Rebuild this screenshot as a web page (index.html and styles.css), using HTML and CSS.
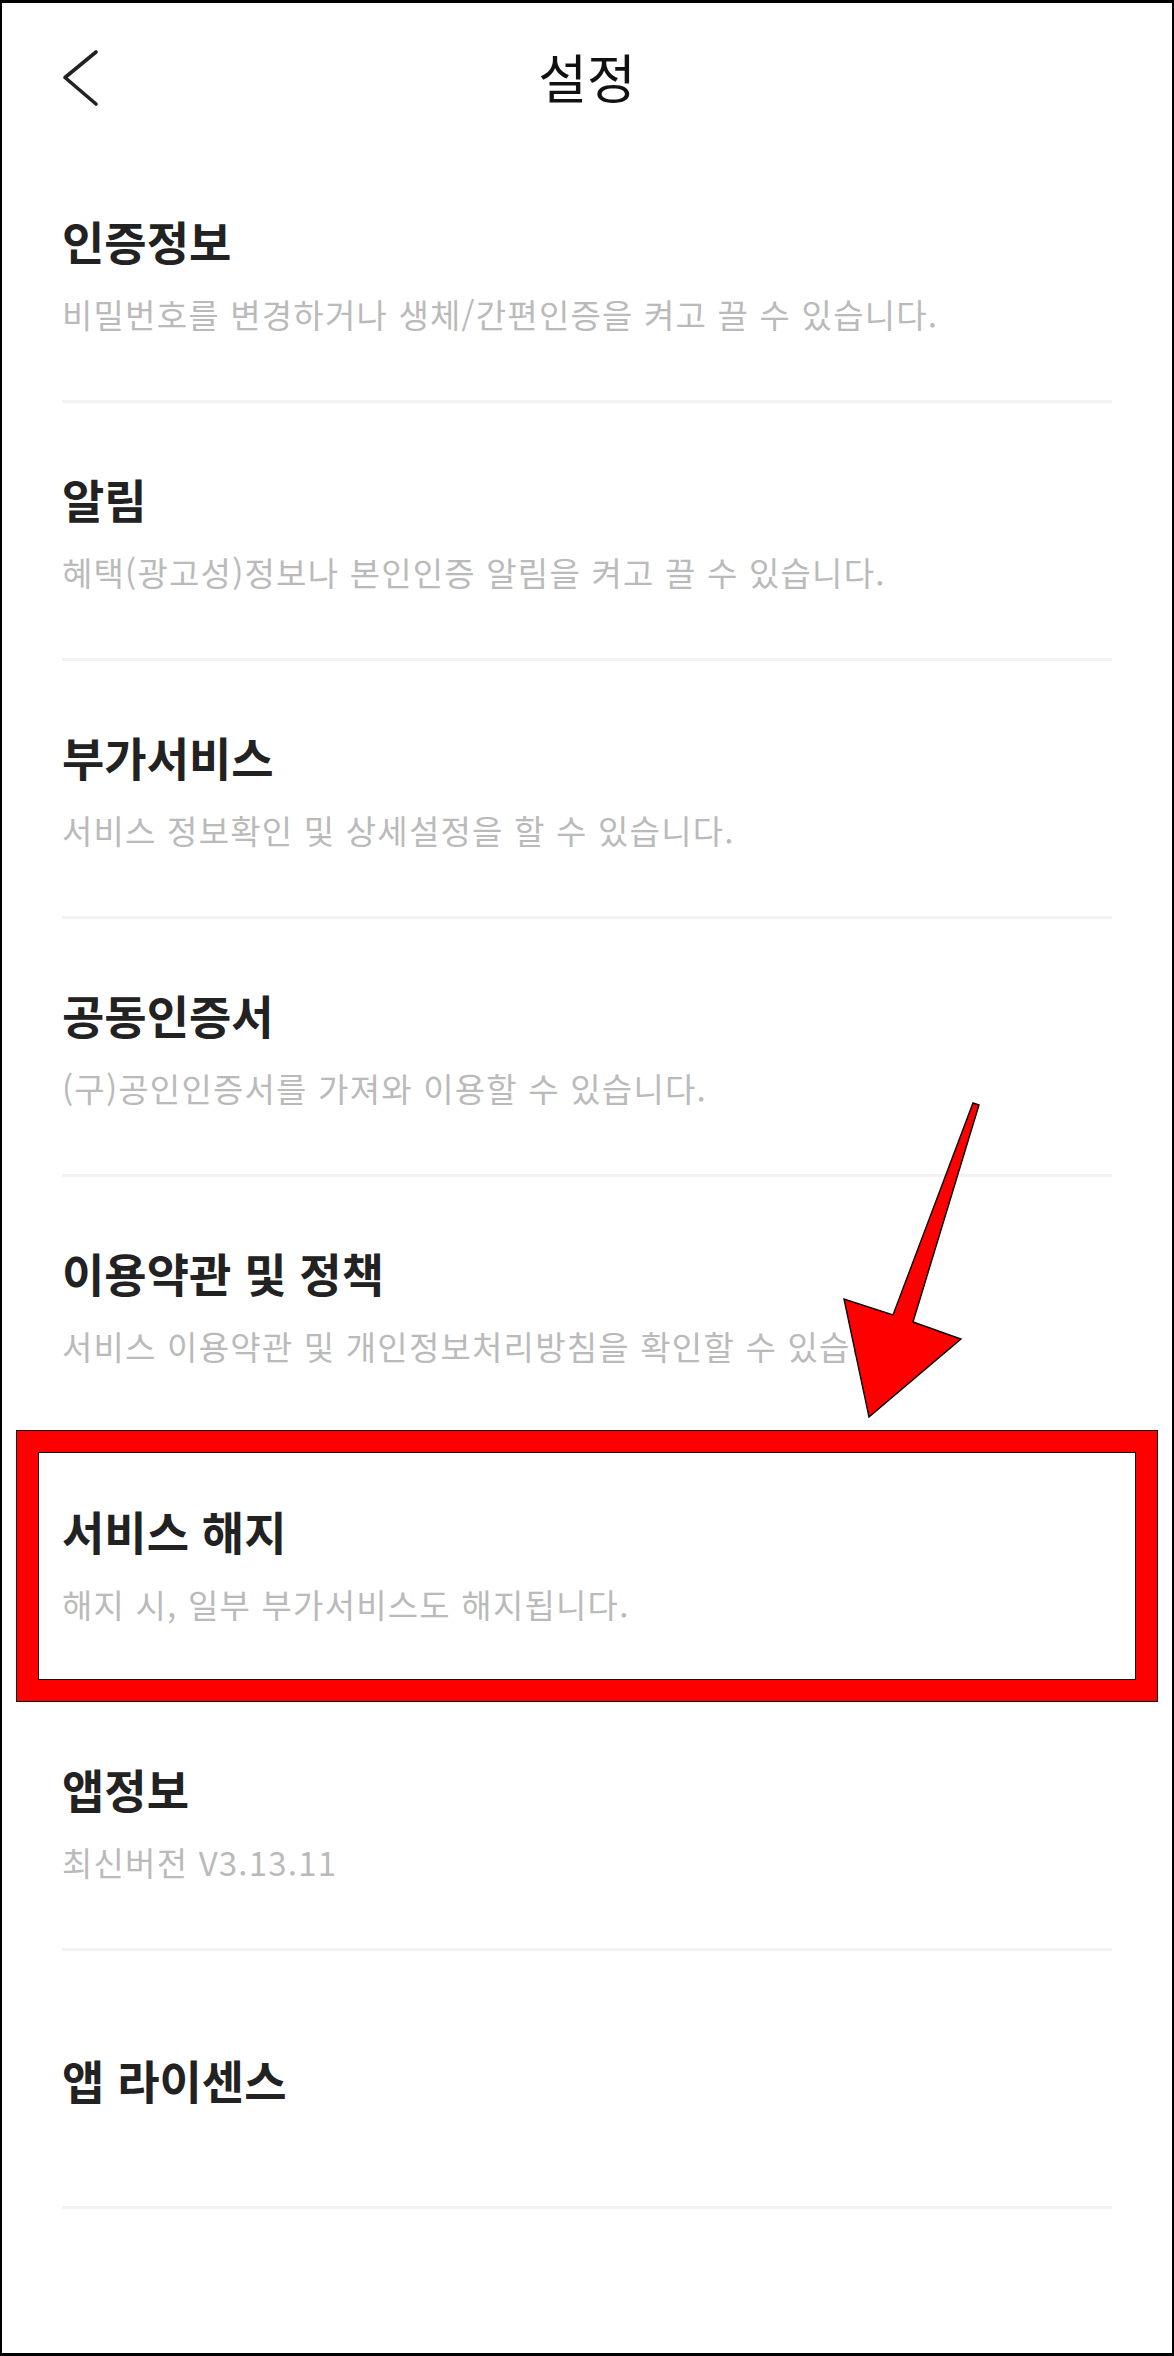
FILE: index.html
```html
<!DOCTYPE html>
<html lang="ko">
<head>
<meta charset="utf-8">
<title>설정</title>
<link rel="stylesheet" href="styles.css">
</head>
<body>
<div class="frame">
  <header class="topbar">
    <div class="topbar-left">
      <svg class="back" viewBox="0 0 44 66" width="44" height="66" aria-label="뒤로">
        <polyline points="36,7 5,32.5 36,59" fill="none" stroke="#222" stroke-width="3.6" stroke-linecap="round" stroke-linejoin="round"/>
      </svg>
    </div>
    <h1 class="topbar-title">설정</h1>
    <div class="topbar-right"></div>
  </header>

  <ul class="menu">
    <li class="menu-item">
      <div class="menu-title">인증정보</div>
      <div class="menu-desc">비밀번호를 변경하거나 생체/간편인증을 켜고 끌 수 있습니다.</div>
    </li>
    <li class="menu-item">
      <div class="menu-title">알림</div>
      <div class="menu-desc">혜택(광고성)정보나 본인인증 알림을 켜고 끌 수 있습니다.</div>
    </li>
    <li class="menu-item">
      <div class="menu-title">부가서비스</div>
      <div class="menu-desc">서비스 정보확인 및 상세설정을 할 수 있습니다.</div>
    </li>
    <li class="menu-item">
      <div class="menu-title">공동인증서</div>
      <div class="menu-desc">(구)공인인증서를 가져와 이용할 수 있습니다.</div>
    </li>
    <li class="menu-item">
      <div class="menu-title">이용약관 및 정책</div>
      <div class="menu-desc">서비스 이용약관 및 개인정보처리방침을 확인할 수 있습니다.</div>
    </li>
    <li class="menu-item">
      <div class="menu-title">서비스 해지</div>
      <div class="menu-desc">해지 시, 일부 부가서비스도 해지됩니다.</div>
    </li>
    <li class="menu-item">
      <div class="menu-title">앱정보</div>
      <div class="menu-desc">최신버전 V3.13.11</div>
    </li>
    <li class="menu-item">
      <div class="menu-title">앱 라이센스</div>
    </li>
  </ul>

  <div class="highlight-box"></div>
  <svg class="arrow" viewBox="838 1098 150 330" width="150" height="330">
    <polygon points="973,1103 979,1105 913,1322 961,1339 869,1417 844,1299 893,1315" fill="#ff0000" stroke="#000" stroke-width="1.4" stroke-linejoin="miter"/>
  </svg>
</div>
</body>
</html>
```

FILE: styles.css
```css
html, body {
  margin: 0;
  padding: 0;
  background: #ffffff;
}

body {
  font-family: "Noto Sans CJK KR", "Noto Sans", sans-serif;
}

.frame {
  position: relative;
  width: 1174px;
  height: 2356px;
  box-sizing: border-box;
  border-style: solid;
  border-color: #000;
  border-width: 3px 2px 3px 2px;
  background: #fff;
  overflow: hidden;
}

.topbar {
  height: 142px;
  display: grid;
  grid-template-columns: 1fr auto 1fr;
  align-items: start;
}

.topbar-left {
  display: flex;
}

.back {
  display: block;
  margin-left: 58px;
  margin-top: 42px;
}

.topbar-title {
  margin: 38px 0 0 0;
  font-size: 53px;
  line-height: 70px;
  font-weight: 400;
  color: #111;
}

.menu {
  list-style: none;
  margin: 0 60px;
  padding: 0;
}

.menu-item {
  height: 255px;
  border-bottom: 3px solid #f2f2f2;
  display: flex;
  flex-direction: column;
  justify-content: center;
}

.menu-title {
  font-size: 46px;
  line-height: 60px;
  font-weight: 700;
  color: #222;
}

.menu-desc {
  margin-top: 22px;
  font-size: 33px;
  line-height: 44px;
  letter-spacing: 1.2px;
  font-weight: 400;
  color: #bababa;
}

.highlight-box {
  position: absolute;
  left: 15px;
  top: 1428px;
  width: 1140px;
  height: 270px;
  box-sizing: border-box;
  border: 21px solid #ff0000;
  box-shadow: 0 0 0 1px #111, inset 0 0 0 1px #111;
}

.arrow {
  position: absolute;
  left: 836px;
  top: 1095px;
  overflow: visible;
}
```
